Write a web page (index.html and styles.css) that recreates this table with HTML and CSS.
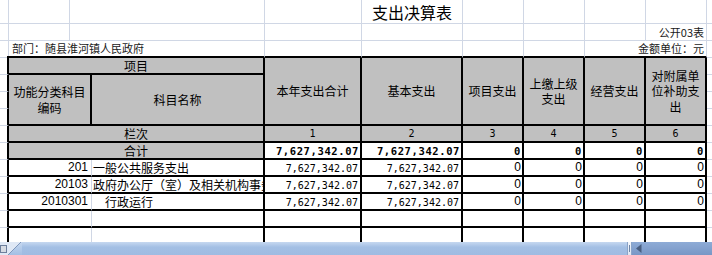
FILE: index.html
```html
<!DOCTYPE html>
<html lang="zh-CN">
<head>
<meta charset="utf-8">
<title>支出决算表</title>
<link rel="stylesheet" href="styles.css">
</head>
<body>
<div class="sheet">
  <!-- row 1 -->
  <div class="c"></div>
  <div class="c"></div>
  <div class="c s2"></div>
  <div class="c"></div>
  <div class="c title ctr"><span>支出决算表</span></div>
  <div class="c"></div>
  <div class="c"></div>
  <div class="c"></div>
  <div class="c"></div>
  <div class="c nr"></div>

  <!-- row 2 -->
  <div class="c"></div>
  <div class="c"></div>
  <div class="c s2"></div>
  <div class="c"></div>
  <div class="c"></div>
  <div class="c"></div>
  <div class="c"></div>
  <div class="c"></div>
  <div class="c small rt"><span>公开03表</span></div>
  <div class="c nr"></div>

  <!-- row 3 -->
  <div class="c corner"></div>
  <div class="c s3 tb small dept"><span>部门：随县淮河镇人民政府</span></div>
  <div class="c tb"></div>
  <div class="c tb"></div>
  <div class="c tb"></div>
  <div class="c tb"></div>
  <div class="c s2 tb small rt"><span>金额单位：元</span></div>
  <div class="c nr"></div>

  <!-- row 4 -->
  <div class="c tr"></div>
  <div class="c s3 tr tb g ctr"><span>项目</span></div>
  <div class="c r4 tr tb g ctr hd"><span>本年支出合计</span></div>
  <div class="c r4 tr tb g ctr hd"><span>基本支出</span></div>
  <div class="c r4 tr tb g ctr hd"><span>项目支出</span></div>
  <div class="c r4 tr tb g ctr hd"><span>上缴上级<br>支出</span></div>
  <div class="c r4 tr tb g ctr hd"><span>经营支出</span></div>
  <div class="c r4 tr tb g ctr hd"><span>对附属单<br>位补助支<br>出</span></div>
  <div class="c nr"></div>

  <!-- rows 5-7 -->
  <div class="c tr"></div>
  <div class="c s2 r3 tr tb g ctr hd"><span>功能分类科目<br>编码</span></div>
  <div class="c r3 tr tb g ctr hd"><span>科目名称</span></div>
  <div class="c nr"></div>
  <div class="c tr"></div>
  <div class="c nr"></div>
  <div class="c tr"></div>
  <div class="c nr"></div>

  <!-- row 8: 栏次 -->
  <div class="c tr"></div>
  <div class="c s3 tr tb g ctr"><span>栏次</span></div>
  <div class="c tr tb g ctr idx"><span>1</span></div>
  <div class="c tr tb g ctr idx"><span>2</span></div>
  <div class="c tr tb g ctr idx"><span>3</span></div>
  <div class="c tr tb g ctr idx"><span>4</span></div>
  <div class="c tr tb g ctr idx"><span>5</span></div>
  <div class="c tr tb g ctr idx"><span>6</span></div>
  <div class="c nr"></div>

  <!-- row 9: 合计 -->
  <div class="c tr"></div>
  <div class="c s3 tr tb g ctr"><span>合计</span></div>
  <div class="c tr tb rt numb"><span>7,627,342.07</span></div>
  <div class="c tr tb rt numb"><span>7,627,342.07</span></div>
  <div class="c tr tb rt numb"><span>0</span></div>
  <div class="c tr tb rt numb"><span>0</span></div>
  <div class="c tr tb rt numb"><span>0</span></div>
  <div class="c tr tb rt numb"><span>0</span></div>
  <div class="c nr"></div>

  <!-- row 10 -->
  <div class="c tr"></div>
  <div class="c s2 tb rt code"><span>201</span></div>
  <div class="c tr tb name"><span>一般公共服务支出</span></div>
  <div class="c tr tb rt num"><span>7,627,342.07</span></div>
  <div class="c tr tb rt num"><span>7,627,342.07</span></div>
  <div class="c tr tb rt zero"><span>0</span></div>
  <div class="c tr tb rt zero"><span>0</span></div>
  <div class="c tr tb rt zero"><span>0</span></div>
  <div class="c tr tb rt zero"><span>0</span></div>
  <div class="c nr"></div>

  <!-- row 11 -->
  <div class="c tr"></div>
  <div class="c s2 tb rt code"><span>20103</span></div>
  <div class="c tr tb name"><span>政府办公厅（室）及相关机构事务</span></div>
  <div class="c tr tb rt num"><span>7,627,342.07</span></div>
  <div class="c tr tb rt num"><span>7,627,342.07</span></div>
  <div class="c tr tb rt zero"><span>0</span></div>
  <div class="c tr tb rt zero"><span>0</span></div>
  <div class="c tr tb rt zero"><span>0</span></div>
  <div class="c tr tb rt zero"><span>0</span></div>
  <div class="c nr"></div>

  <!-- row 12 -->
  <div class="c tr"></div>
  <div class="c s2 tb rt code"><span>2010301</span></div>
  <div class="c tr tb name indent"><span>行政运行</span></div>
  <div class="c tr tb rt num"><span>7,627,342.07</span></div>
  <div class="c tr tb rt num"><span>7,627,342.07</span></div>
  <div class="c tr tb rt zero"><span>0</span></div>
  <div class="c tr tb rt zero"><span>0</span></div>
  <div class="c tr tb rt zero"><span>0</span></div>
  <div class="c tr tb rt zero"><span>0</span></div>
  <div class="c nr"></div>

  <!-- row 13 -->
  <div class="c tr"></div>
  <div class="c s2 tb"></div>
  <div class="c tr tb"></div>
  <div class="c tr tb"></div>
  <div class="c tr tb"></div>
  <div class="c tr tb"></div>
  <div class="c tr tb"></div>
  <div class="c tr tb"></div>
  <div class="c tr tb"></div>
  <div class="c nr"></div>

  <!-- row 14 (cut off by the sheet bar) -->
  <div class="c tr nb"></div>
  <div class="c s2 nb"></div>
  <div class="c tr nb"></div>
  <div class="c tr nb"></div>
  <div class="c tr nb"></div>
  <div class="c tr nb"></div>
  <div class="c tr nb"></div>
  <div class="c tr nb"></div>
  <div class="c tr nb"></div>
  <div class="c nr nb"></div>
</div>

<div class="bar">
  <svg class="tabicon" width="22" height="13" viewBox="0 0 22 13">
    <polygon points="0,0 21,0 8,13 0,13" fill="#dfe8f5"/>
    <line x1="21" y1="0" x2="8" y2="13" stroke="#7f97bb" stroke-width="1"/>
    <rect x="0.5" y="3.5" width="6" height="7" fill="#d6dbe3" stroke="#6d7f9c"/>
  </svg>
  <div class="bar-fill"></div>
  <div class="split"><span class="grip"></span></div>
  <div class="bar-dark">
    <svg class="arrow" width="6" height="9" viewBox="0 0 6 9">
      <polygon points="5.5,0 5.5,9 0,4.5" fill="#4a5f80"/>
    </svg>
  </div>
</div>
</body>
</html>
```

FILE: styles.css
```css
* {
  box-sizing: border-box;
  margin: 0;
  padding: 0;
}

html,
body {
  width: 712px;
  height: 255px;
  overflow: hidden;
  background: #ffffff;
}

body {
  font-family: "Noto Sans CJK SC", "Liberation Sans", sans-serif;
  font-size: 12px;
  color: #000000;
}

.sheet {
  display: grid;
  grid-template-columns: 9px 61px 22px 173px 97px 101px 61px 61px 61px 61px 5px;
  grid-template-rows: 24px repeat(12, 17px) 14px;
}

.c {
  display: flex;
  align-items: center;
  border-right: 1px solid #d0d7e5;
  border-bottom: 1px solid #d0d7e5;
  overflow: hidden;
  white-space: nowrap;
  line-height: 15px;
  padding: 0 2px;
  min-width: 0;
}

.tr { border-right: 2px solid #000000; }
.tb { border-bottom: 2px solid #000000; }
.nr { border-right: 0; }
.nb { border-bottom: 0; }

.g { background: #c0c0c0; }

.s2 { grid-column: span 2; }
.s3 { grid-column: span 3; }
.r3 { grid-row: span 3; }
.r4 { grid-row: span 4; }

.ctr {
  justify-content: center;
  text-align: center;
  white-space: normal;
}

.rt { justify-content: flex-end; }

.corner {
  position: relative;
  overflow: visible;
}

.corner::after {
  content: "";
  position: absolute;
  right: -1px;
  bottom: -1px;
  width: 2px;
  height: 2px;
  background: #000000;
}

.title {
  font-size: 16px;
  line-height: 20px;
}

.small {
  font-size: 11px;
  color: #1a1a1a;
}

.dept {
  padding-left: 3px;
}

.hd {
  line-height: 15.5px;
}

.idx {
  font-family: "DejaVu Sans Mono", monospace;
  font-size: 10px;
}

.num {
  font-family: "DejaVu Sans Mono", monospace;
  font-size: 10px;
  padding-top: 2px;
}

.numb {
  font-family: "DejaVu Sans Mono", monospace;
  font-size: 10.5px;
  font-weight: bold;
  letter-spacing: 0.6px;
  padding-right: 1px;
  padding-top: 1px;
}

.code {
  font-family: "Liberation Sans", sans-serif;
  font-size: 12px;
  padding-right: 3px;
}

.zero {
  font-family: "Liberation Sans", sans-serif;
  font-size: 12px;
  padding-right: 1px;
}

.name {
  padding-left: 1px;
  padding-right: 0;
  justify-content: flex-start;
}

.indent {
  padding-left: 13px;
}

.bar {
  display: flex;
  height: 13px;
  width: 712px;
}

.tabicon {
  display: block;
  flex: 0 0 22px;
  background: linear-gradient(#c6d8f0, #a3bfe4);
}

.bar-fill {
  flex: 1 1 auto;
  background: linear-gradient(#c6d8f0, #a3bfe4 40%, #9fbbe2);
}

.split {
  flex: 0 0 5px;
  display: flex;
  align-items: center;
  justify-content: center;
  background: linear-gradient(#f4f7fc, #dbe5f3);
  border-left: 1px solid #8aa4c8;
  border-right: 1px solid #8aa4c8;
}

.grip {
  display: block;
  width: 1px;
  height: 7px;
  background: #6f86a8;
}

.bar-dark {
  flex: 0 0 80px;
  display: flex;
  align-items: center;
  padding-left: 4px;
  background: linear-gradient(#8eabd6, #7897c6);
}

.arrow {
  display: block;
}
```
